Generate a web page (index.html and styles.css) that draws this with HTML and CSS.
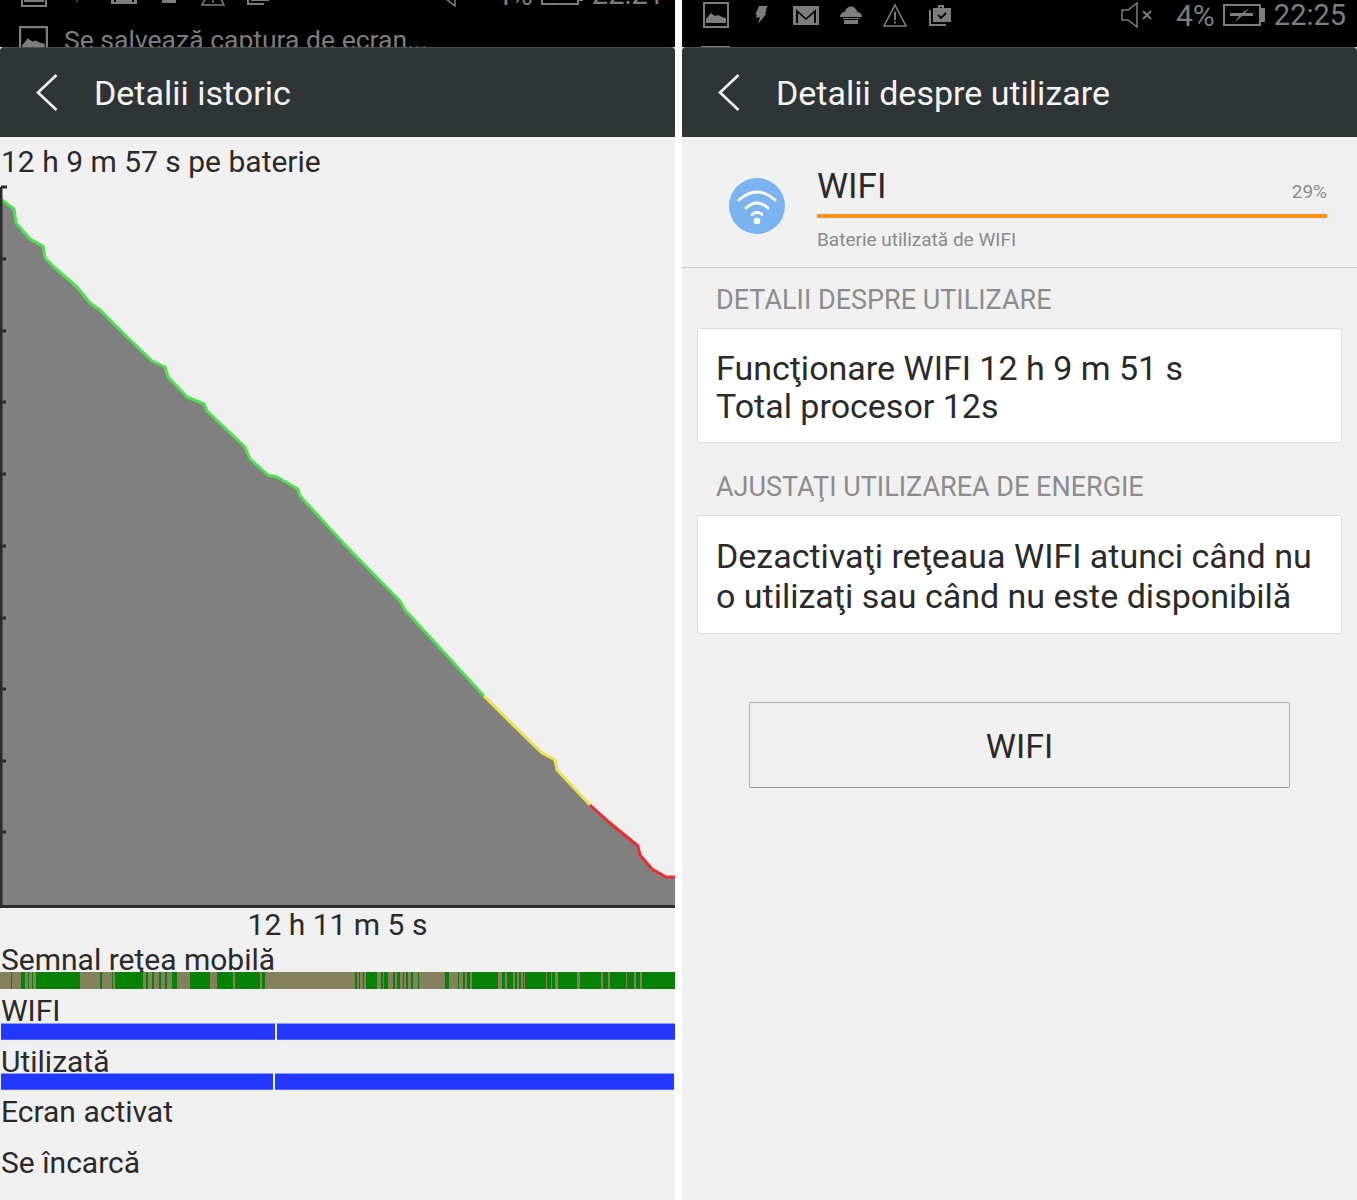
FILE: index.html
```html
<!DOCTYPE html>
<html lang="ro">
<head>
  <meta charset="UTF-8">
  <meta name="viewport" content="width=device-width, initial-scale=1">
  <title>Detalii baterie</title>
  <link rel="stylesheet" href="styles.css">
</head>
<body>

<svg class="defs" width="0" height="0">
  <symbol id="i-picture" viewBox="0 0 26 26">
    <rect x="1" y="1" width="24" height="24" fill="none" stroke="currentColor" stroke-width="2"/>
    <path d="M3 21v-4l5-6 4 3 3-1 4 2 4 1v5z" fill="currentColor"/>
  </symbol>
  <symbol id="i-bolt" viewBox="0 0 13 18">
    <path d="M4 0h9l-3 4 2-1-2 5 2-1-9 11 2-7-4 1 1-4-2 1z" fill="currentColor"/>
  </symbol>
  <symbol id="i-mail" viewBox="0 0 26 20">
    <path d="M0 1h26v19H0z" fill="currentColor"/>
    <path d="M3 18V4l10 9 10-9v14h-2V8l-8 7-8-7v10z" fill="#000"/>
  </symbol>
  <symbol id="i-cloud" viewBox="0 0 22 18">
    <path d="M0 11c0-3 2-5 4.500-5C5.500 2.500 8.500.5 11 .5s5.500 2 6.500 5.500c2.500 0 4.500 2 4.500 5z" fill="currentColor"/>
    <path d="M3 12h16v1H3zM4 14h14v4H4z" fill="currentColor"/>
  </symbol>
  <symbol id="i-warning" viewBox="0 0 24 24">
    <path d="M12 2 23 23H1z" fill="none" stroke="currentColor" stroke-width="1.600"/>
    <path d="M11 9h2v8h-2zM11 18.500h2v2h-2z" fill="currentColor"/>
  </symbol>
  <symbol id="i-case" viewBox="0 0 24 24">
    <path d="M1 7v16h17v-2H3V7z" fill="currentColor"/>
    <path d="M5 5h5V2h6v3h7v14H5z" fill="currentColor"/>
    <path d="M12 4h2v1h-2z" fill="#000"/>
    <path d="m10 12 3 3 5-5" fill="none" stroke="#000" stroke-width="1.800"/>
  </symbol>
  <symbol id="i-mute" viewBox="0 0 32 26">
    <path d="M1 8v10h6l9 7V1L7 8z" fill="none" stroke="currentColor" stroke-width="1.500"/>
    <path d="m22 9 8 8m0-8-8 8" fill="none" stroke="currentColor" stroke-width="1.800"/>
  </symbol>
  <symbol id="i-battery" viewBox="0 0 42 22">
    <rect x="1" y="1" width="36" height="20" fill="none" stroke="currentColor" stroke-width="2"/>
    <path d="M38 4h4v14h-4z" fill="currentColor"/>
    <path d="M7 9h12l7-5-4 5h8v3H19l-7 6 4-6H7z" fill="currentColor"/>
  </symbol>
  <symbol id="i-back" viewBox="0 0 24 40">
    <path d="M21.500 2 3 19.500 21.500 37" fill="none" stroke="currentColor" stroke-width="2.600"/>
  </symbol>
</svg>

<main class="screens">

  <section class="screen">
    <div class="statusbar">
      <div class="status-row status-row-up">
        <svg class="si si-picture"><use href="#i-picture"/></svg>
        <svg class="si si-bolt"><use href="#i-bolt"/></svg>
        <svg class="si si-mail"><use href="#i-mail"/></svg>
        <svg class="si si-cloud"><use href="#i-cloud"/></svg>
        <svg class="si si-warning"><use href="#i-warning"/></svg>
        <svg class="si si-case"><use href="#i-case"/></svg>
        <svg class="si si-mute"><use href="#i-mute"/></svg>
        <span class="status-pct">4%</span>
        <svg class="si si-battery"><use href="#i-battery"/></svg>
        <span class="status-time">22:21</span>
      </div>
      <div class="notice">
        <svg class="notice-icon"><use href="#i-picture"/></svg>
        <span>Se salvează captura de ecran...</span>
      </div>
    </div>
    <header class="titlebar">
      <svg class="back"><use href="#i-back"/></svg>
      <h1>Detalii istoric</h1>
    </header>

    <div class="history">
      <p class="on-battery">12 h 9 m 57 s pe baterie</p>

      <svg class="chart" viewBox="0 0 675 723" width="675" height="723">
        <path class="area" d="M2 15 14 24 16 38 30 54 43 61 45 73 55 83 77 102 90 118 100 125 127 152 152 176 165 182 168 192 187 212 204 219 207 226 245 262 250 274 268 290 277 292 298 304 300 311 345 360 400 416 405 425 484 511 513 540 542 568 555 575 557 585 590 620 610 638 638 661 640 670 652 684 666 692 675 692V723H2z"/>
        <path class="line line-green" d="M2 15 14 24 16 38 30 54 43 61 45 73 55 83 77 102 90 118 100 125 127 152 152 176 165 182 168 192 187 212 204 219 207 226 245 262 250 274 268 290 277 292 298 304 300 311 345 360 400 416 405 425 484 511"/>
        <path class="line line-yellow" d="M484 511 513 540 542 568 555 575 557 585 590 620"/>
        <path class="line line-red" d="M590 620 610 638 638 661 640 670 652 684 666 692 675 692"/>
        <path class="axis" d="M1 2V721.500H675M1 2H7M1 74H6M1 146H6M1 217H6M1 289H6M1 361H6M1 433H6M1 504H6M1 576H6M1 647H6"/>
      </svg>

      <p class="duration">12 h 11 m 5 s</p>

      <div class="track">
        <div class="track-label">Semnal reţea mobilă</div>
        <svg class="signal" viewBox="0 0 675 17" width="675" height="17">
          <rect class="signal-bg" width="675" height="17"/>
          <g class="signal-on">
            <rect x="11" width="1" height="17"/><rect x="21" width="4" height="17"/><rect x="28" width="1" height="17"/>
            <rect x="32" width="1" height="17"/><rect x="36" width="44" height="17"/><rect x="100" width="2" height="17"/>
            <rect x="112" width="1" height="17"/><rect x="115" width="28" height="17"/><rect x="146" width="2" height="17"/>
            <rect x="152" width="2" height="17"/><rect x="159" width="2" height="17"/><rect x="165" width="2" height="17"/>
            <rect x="172" width="5" height="17"/><rect x="190" width="20" height="17"/><rect x="217" width="16" height="17"/>
            <rect x="235" width="25" height="17"/><rect x="262" width="3" height="17"/><rect x="355" width="2" height="17"/>
            <rect x="359" width="1" height="17"/><rect x="363" width="1" height="17"/><rect x="366" width="11" height="17"/>
            <rect x="381" width="2" height="17"/><rect x="384" width="4" height="17"/><rect x="393" width="2" height="17"/>
            <rect x="397" width="3" height="17"/><rect x="403" width="1" height="17"/><rect x="406" width="2" height="17"/>
            <rect x="411" width="2" height="17"/><rect x="418" width="1" height="17"/><rect x="445" width="4" height="17"/>
            <rect x="458" width="1" height="17"/><rect x="463" width="2" height="17"/><rect x="467" width="3" height="17"/>
            <rect x="472" width="26" height="17"/><rect x="502" width="3" height="17"/><rect x="507" width="6" height="17"/>
            <rect x="515" width="2" height="17"/><rect x="519" width="2" height="17"/><rect x="523" width="1" height="17"/>
            <rect x="525" width="21" height="17"/><rect x="547" width="4" height="17"/><rect x="552" width="3" height="17"/>
            <rect x="558" width="19" height="17"/><rect x="580" width="21" height="17"/><rect x="603" width="5" height="17"/>
            <rect x="610" width="16" height="17"/><rect x="627" width="7" height="17"/><rect x="636" width="4" height="17"/>
            <rect x="642" width="33" height="17"/>
          </g>
        </svg>
      </div>
      <div class="track">
        <div class="track-label">WIFI</div>
        <div class="bar bar-wifi"><span></span><span></span></div>
      </div>
      <div class="track track-short">
        <div class="track-label">Utilizată</div>
        <div class="bar bar-used"><span></span><span></span></div>
      </div>
      <div class="track">
        <div class="track-label">Ecran activat</div>
        <div class="bar"></div>
      </div>
      <div class="track track-short">
        <div class="track-label">Se încarcă</div>
        <div class="bar"></div>
      </div>
    </div>
  </section>

  <section class="screen">
    <div class="statusbar">
      <div class="status-row">
        <svg class="si si-picture"><use href="#i-picture"/></svg>
        <svg class="si si-bolt"><use href="#i-bolt"/></svg>
        <svg class="si si-mail"><use href="#i-mail"/></svg>
        <svg class="si si-cloud"><use href="#i-cloud"/></svg>
        <svg class="si si-warning"><use href="#i-warning"/></svg>
        <svg class="si si-case"><use href="#i-case"/></svg>
        <svg class="si si-mute"><use href="#i-mute"/></svg>
        <span class="status-pct">4%</span>
        <svg class="si si-battery"><use href="#i-battery"/></svg>
        <span class="status-time">22:25</span>
      </div>
      <div class="notice">
        <svg class="notice-icon"><use href="#i-picture"/></svg>
      </div>
    </div>
    <header class="titlebar">
      <svg class="back"><use href="#i-back"/></svg>
      <h1>Detalii despre utilizare</h1>
    </header>

    <div class="app-head">
      <svg class="wifi-badge" viewBox="0 0 56 56" width="56" height="56">
        <circle cx="28" cy="28" r="28" fill="#7ab3f0"/>
        <g fill="none" stroke="#fff" stroke-width="2.800" stroke-linecap="round">
          <path d="M10 22Q28 6 46 22"/>
          <path d="M17 30Q28 20 39 30"/>
          <path d="M23 36.500Q28 32 33 36.500"/>
        </g>
        <circle cx="28" cy="43" r="3.300" fill="#fff"/>
      </svg>
      <div class="app-info">
        <div class="app-top">
          <span class="app-name">WIFI</span>
          <span class="app-pct">29%</span>
        </div>
        <div class="app-meter"></div>
        <div class="app-sub">Baterie utilizată de WIFI</div>
      </div>
    </div>

    <h2 class="section-title">DETALII DESPRE UTILIZARE</h2>
    <div class="card card-usage">
      Funcţionare WIFI 12 h 9 m 51 s<br>
      Total procesor 12s
    </div>

    <h2 class="section-title section-title-two">AJUSTAŢI UTILIZAREA DE ENERGIE</h2>
    <div class="card card-tip">
      Dezactivaţi reţeaua WIFI atunci când nu<br>
      o utilizaţi sau când nu este disponibilă
    </div>

    <button class="wide-button">WIFI</button>
  </section>

</main>

</body>
</html>
```

FILE: styles.css
```css
html, body {
  margin: 0;
  background-color: #fff;
}
body {
  font-family: Roboto, sans-serif;
  color: #2a2a2a;
  height: 1200px;
  overflow: hidden;
}
.defs {
  display: block;
  height: 0;
}
.screens {
  display: flex;
  gap: 7px;
}
.screen {
  width: 675px;
  height: 1200px;
  overflow: hidden;
  background-color: #f0f0f0;
}

/* status bar */
.statusbar {
  height: 47px;
  background-color: #000;
  overflow: hidden;
  color: #7d7d7d;
}
.status-row {
  display: flex;
  align-items: center;
  height: 30px;
  padding: 0 12px 0 21px;
  font-size: 30px;
  margin-bottom: 16px;
}
.status-row-up {
  margin-top: -21px;
}
.si {
  flex: none;
}
.si-picture { width: 26px; height: 26px; }
.si-bolt { width: 13px; height: 18px; margin-left: 26px; }
.si-mail { width: 26px; height: 20px; margin-left: 25px; }
.si-cloud { width: 22px; height: 18px; margin-left: 21px; }
.si-warning { width: 24px; height: 24px; margin-left: 21px; }
.si-case { width: 24px; height: 24px; margin-left: 21px; }
.si-mute { width: 32px; height: 26px; margin-left: 169px; }
.si-battery { width: 42px; height: 22px; margin-left: 8px; }
.status-pct {
  margin-left: 23px;
}
.status-time {
  margin-left: 9px;
  font-size: 29px;
}
.notice {
  display: flex;
  align-items: center;
  gap: 16px;
  padding-left: 19px;
  font-size: 26.500px;
  line-height: 30px;
}
.notice-icon {
  width: 29px;
  height: 29px;
  flex: none;
}

/* title bar */
.titlebar {
  display: flex;
  align-items: center;
  height: 89px;
  background-color: #2f3437;
  border-top: 1px solid #4b4f52;
  border-radius: 4px 4px 0 0;
  color: #f4f4f4;
}
.back {
  width: 24px;
  height: 40px;
  margin-left: 35px;
  color: #f4f4f4;
}
.titlebar h1 {
  margin: 0 0 0 35px;
  font-size: 34px;
  font-weight: 400;
}

/* history side */
.on-battery {
  margin: 0;
  height: 48px;
  line-height: 50px;
  font-size: 30px;
  padding-left: 1px;
}
.chart {
  display: block;
}
.area {
  fill: #808080;
}
.line {
  fill: none;
  stroke-width: 3;
  stroke-linejoin: round;
}
.line-green { stroke: #4fe04f; }
.line-yellow { stroke: #ece14a; }
.line-red { stroke: #ee2b2e; }
.axis {
  fill: none;
  stroke: #2b2b2b;
  stroke-width: 3;
}
.duration {
  margin: 0;
  height: 30px;
  line-height: 34px;
  font-size: 30px;
  text-align: center;
}
.track-label {
  height: 34px;
  padding-left: 1px;
  line-height: 44px;
  font-size: 30px;
  white-space: nowrap;
}
.track-short .track-label {
  height: 33px;
}
.signal {
  display: block;
}
.signal-bg {
  fill: #85815f;
}
.signal-on rect {
  fill: #078207;
}
.bar {
  display: flex;
  height: 17px;
  gap: 2px;
  padding-left: 1px;
}
.bar span {
  background-color: #2238ff;
  box-shadow: inset 0 1px #8c9cff, inset 0 -1px #4f62ff;
}
.bar-wifi span:first-child { width: 274px; }
.bar-wifi span:last-child { width: 398px; }
.bar-used span:first-child { width: 272px; }
.bar-used span:last-child { width: 399px; }

/* usage side */
.app-head {
  display: flex;
  align-items: flex-start;
  height: 130px;
  padding: 0 30px 0 47px;
  border-bottom: 1px solid #c6c6c6;
}
.wifi-badge {
  margin-top: 41px;
  flex: none;
}
.app-info {
  flex: 1;
  margin-left: 32px;
}
.app-top {
  display: flex;
  justify-content: space-between;
  align-items: flex-end;
  height: 77px;
}
.app-name {
  font-size: 35px;
  line-height: 50px;
  margin-bottom: 2px;
}
.app-pct {
  font-size: 19px;
  line-height: 22px;
  margin-bottom: 11px;
  color: #8a8a8a;
}
.app-meter {
  height: 4px;
  background-color: #f7941e;
}
.app-sub {
  margin-top: 11px;
  font-size: 19px;
  line-height: 22px;
  color: #8a8a8a;
}
.section-title {
  margin: 0;
  height: 60px;
  padding-left: 34px;
  font-size: 27px;
  font-weight: 400;
  line-height: 64px;
  color: #8c8c8c;
}
.section-title-two {
  height: 72px;
  line-height: 88px;
}
.card {
  margin: 0 15px;
  padding: 0 18px;
  background-color: #fff;
  border: 1px solid #dcdcdc;
  border-radius: 3px;
  font-size: 34px;
  white-space: nowrap;
}
.card-usage {
  height: 93px;
  padding-top: 20px;
  line-height: 38px;
}
.card-tip {
  height: 97px;
  padding-top: 20px;
  line-height: 40px;
}
.wide-button {
  display: block;
  width: 541px;
  height: 86px;
  margin: 68px 0 0 67px;
  padding-top: 2px;
  background-color: #f0f0f0;
  border: 1px solid #aeaeae;
  border-bottom-color: #999;
  border-radius: 2px;
  color: #2a2a2a;
  font-family: Roboto, sans-serif;
  font-size: 34px;
}
```
